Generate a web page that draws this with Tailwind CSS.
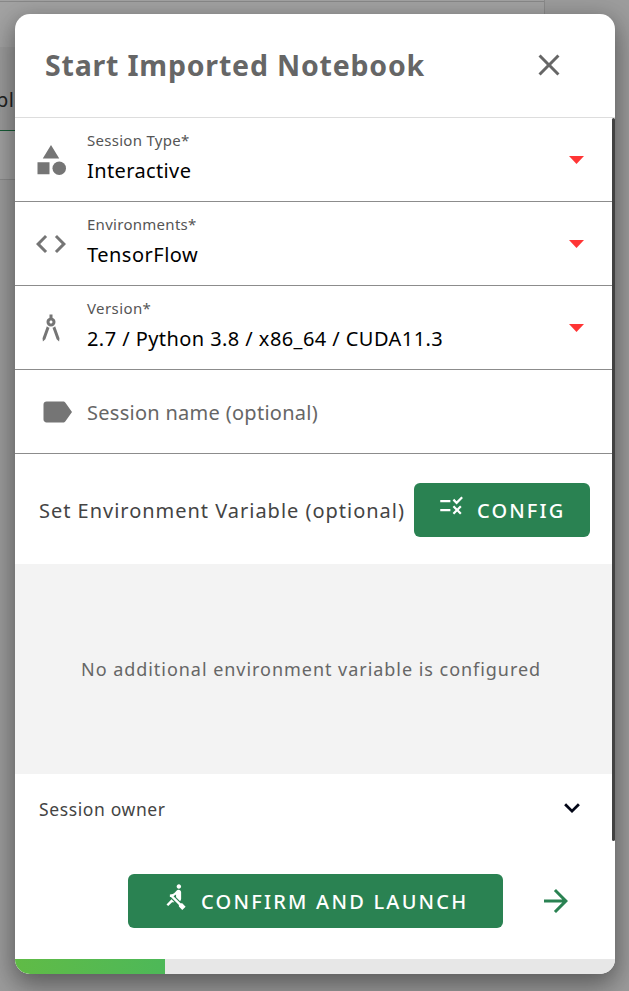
<!DOCTYPE html>
<html lang="en">
<head>
<meta charset="utf-8">
<title>Start Imported Notebook</title>
<script src="https://cdn.jsdelivr.net/npm/@tailwindcss/browser@4"></script>
</head>
<body class="relative h-[991px] w-[629px] overflow-hidden bg-[#9c9c9c] font-['Noto_Sans','Open_Sans',sans-serif]">
  <!-- Page behind the dialog -->
  <div class="absolute left-0 top-0 h-[180px] w-[545px] border-b border-r border-[#8b8b8b] bg-[#a2a2a2]">
    <div class="h-[2px] border-b border-[#888]"></div>
    <div class="h-[45px]"></div>
    <div class="flex h-[84px] w-full items-center border-b border-[#175c37] bg-[#9b9b9b] pt-[22px] text-[20px] text-[#222]"><span class="-ml-[4px] tracking-[0.4px]">pl</span></div>
  </div>

  <main class="absolute left-[15px] top-[14px] flex h-[960px] w-[600px] flex-col rounded-[15px] bg-white shadow-[0_12px_28px_2px_rgba(0,0,0,0.3),0_4px_20px_rgba(0,0,0,0.18)]">
    <header class="flex h-[104px] shrink-0 items-center justify-between border-b border-[#ddd] pb-[2px] pl-[30px] pr-[48px]">
      <h1 class="whitespace-nowrap text-[28.5px] font-bold leading-10 tracking-[0.8px] text-[#666]">Start Imported Notebook</h1>
      <svg class="size-9" viewBox="0 0 24 24" fill="#666"><path d="M19 6.41 17.59 5 12 10.59 6.41 5 5 6.41 10.59 12 5 17.59 6.41 19 12 13.41 17.59 19 19 17.59 13.41 12z"/></svg>
    </header>

    <div class="flex h-[723px] shrink-0">
      <div class="flex w-[597px] flex-col">
        <section class="flex h-[84px] shrink-0 items-center border-b border-[#8c8c8c] pl-[18px] pr-[28px]">
          <svg class="size-9" viewBox="0 0 24 24" fill="#757575"><path d="m12 2-5.5 9h11zM3 13.5h8v8H3z"/><circle cx="17.5" cy="17.5" r="4.5"/></svg>
          <div class="ml-[18px] flex-1 whitespace-nowrap pb-[5px]"><div class="text-[15px] leading-[22px] tracking-[0.28px] text-[#555]">Session Type*</div><div class="mt-[5px] text-[20px] leading-[30px] tracking-[0.38px] text-black">Interactive</div></div>
          <svg class="h-[8px] w-[15px]" viewBox="0 0 15 8" fill="#ff3535"><path d="M0 0h15L7.5 8z"/></svg>
        </section>
        <section class="flex h-[84px] shrink-0 items-center border-b border-[#8c8c8c] pl-[18px] pr-[28px]">
          <svg class="size-9" viewBox="0 0 24 24" fill="#757575"><path d="M9.4 16.6 4.8 12l4.6-4.6L8 6l-6 6 6 6zM14.6 16.6l4.6-4.6-4.6-4.6L16 6l6 6-6 6z"/></svg>
          <div class="ml-[18px] flex-1 whitespace-nowrap pb-[5px]"><div class="text-[15px] leading-[22px] tracking-[0.28px] text-[#555]">Environments*</div><div class="mt-[5px] text-[20px] leading-[30px] tracking-[0.5px] text-black">TensorFlow</div></div>
          <svg class="h-[8px] w-[15px]" viewBox="0 0 15 8" fill="#ff3535"><path d="M0 0h15L7.5 8z"/></svg>
        </section>
        <section class="flex h-[84px] shrink-0 items-center border-b border-[#8c8c8c] pl-[18px] pr-[28px]">
          <svg class="size-9" viewBox="0 0 24 24" fill="#757575"><path d="M6.36 18.78 6.61 21l1.62-1.54 2.77-7.6c-.68-.17-1.28-.51-1.77-.98zM14.77 10.88c-.49.47-1.1.81-1.77.98l2.77 7.6L17.39 21l.26-2.22zM15 8c0-1.3-.84-2.4-2-2.82V3h-2v2.18C9.84 5.6 9 6.7 9 8c0 1.66 1.34 3 3 3s3-1.34 3-3zm-3 1c-.55 0-1-.45-1-1s.45-1 1-1 1 .45 1 1-.45 1-1 1z"/></svg>
          <div class="ml-[18px] flex-1 whitespace-nowrap pb-[5px]"><div class="text-[15px] leading-[22px] tracking-[0.4px] text-[#555]">Version*</div><div class="mt-[5px] text-[20px] leading-[30px] tracking-[0.43px] text-black">2.7 / Python 3.8 / x86_64 / CUDA11.3</div></div>
          <svg class="h-[8px] w-[15px]" viewBox="0 0 15 8" fill="#ff3535"><path d="M0 0h15L7.5 8z"/></svg>
        </section>
        <section class="flex h-[84px] shrink-0 items-center border-b border-[#8c8c8c] pl-[24px]">
          <svg class="size-9" viewBox="0 0 24 24" fill="#757575"><path d="M17.63 5.84C17.27 5.33 16.67 5 16 5L5 5.01C3.9 5.01 3 5.9 3 7v10c0 1.1.9 1.99 2 1.99L16 19c.67 0 1.27-.33 1.63-.84L22 12z"/></svg>
          <div class="ml-[12px] whitespace-nowrap pt-[3px] text-[20px] leading-[30px] tracking-[0.28px] text-[#666]">Session name (optional)</div>
        </section>
        <section class="flex h-[110px] shrink-0 items-center justify-between pl-[24px] pr-[22px] pt-[2px]">
          <div class="whitespace-nowrap pt-[1px] text-[20px] leading-[30px] tracking-[0.98px] text-[#444]">Set Environment Variable (optional)</div>
          <button class="flex h-[54px] w-[176px] shrink-0 items-center rounded-[6px] bg-[#2a8252] pl-[24px] text-white">
            <svg class="-mt-[10px] size-[27px]" viewBox="0 0 24 24" fill="currentColor"><path d="M16.54 11 13 7.46l1.41-1.41 2.12 2.12 4.24-4.24 1.41 1.41zM11 7H2v2h9zM21 13.41 19.59 12 17 14.59 14.41 12 13 13.41 15.59 16 13 18.59 14.41 20 17 17.41 19.59 20 21 18.59 18.41 16zM11 15H2v2h9z"/></svg>
            <span class="ml-[12px] pt-[1px] text-[20px] font-medium leading-[30px] tracking-[2.1px]">CONFIG</span>
          </button>
        </section>
        <section class="flex h-[210px] shrink-0 items-center whitespace-nowrap bg-[#f3f3f3] pl-[66px] text-[18px] tracking-[0.96px] text-[#666]"><span>No additional environment variable is configured</span></section>
        <section class="flex h-[67px] items-center justify-between pb-[2px] pl-[24px] pr-[22px] pt-[4px]">
          <span class="pt-[1px] text-[17.5px] tracking-[0.62px] text-[#444]">Session owner</span>
          <svg class="-mt-[1px] size-9" viewBox="0 0 24 24" fill="#020617"><path d="M8.06 8.84 12 12.78l3.94-3.94L17.25 10.15 12 15.4 6.75 10.15z"/></svg>
        </section>
      </div>
      <div class="h-[723px] w-[3px] rounded-[2px] bg-[#424242]"></div>
    </div>

    <footer class="flex h-[118px] shrink-0 items-center pl-[113px] pt-[2px]">
      <button class="flex h-[54px] w-[375px] items-center rounded-[6px] bg-[#2a8252] pl-[34px] text-white">
        <svg class="-mt-[10px] size-[27px]" viewBox="0 0 24 24" fill="currentColor"><path d="M8.5 14.5 4 19l1.5 1.5L9 17h2zM15 1c-1.1 0-2 .9-2 2s.9 2 2 2 2-.9 2-2-.9-2-2-2zm6 20.01L18 24l-2.99-3.01V19.5l-7.1-7.09c-.31.05-.61.07-.91.07v-2.16c1.66.03 3.61-.87 4.67-2.04l1.4-1.55c.19-.21.43-.38.69-.5.29-.14.62-.23.96-.23h.03C15.99 6.01 17 7.02 17 8.26v5.75c0 .84-.35 1.61-.92 2.16l-3.58-3.58v-2.27c-.63.52-1.43 1.02-2.29 1.39L16.5 18H18z"/></svg>
        <span class="ml-[12px] whitespace-nowrap pt-[1px] text-[20px] font-medium leading-[30px] tracking-[2.22px]">CONFIRM AND LAUNCH</span>
      </button>
      <svg class="ml-[35px] size-9" viewBox="0 0 24 24" fill="#2a8252"><path d="m12 4-1.41 1.41L16.17 11H4v2h12.17l-5.58 5.59L12 20l8-8z"/></svg>
    </footer>
    <div class="flex h-[15px] shrink-0 overflow-hidden rounded-b-[15px] bg-[#e7e7e7]"><div class="w-[150px] bg-linear-to-r from-[#60bb46] to-[#4db858]"></div></div>
  </main>
</body>
</html>
